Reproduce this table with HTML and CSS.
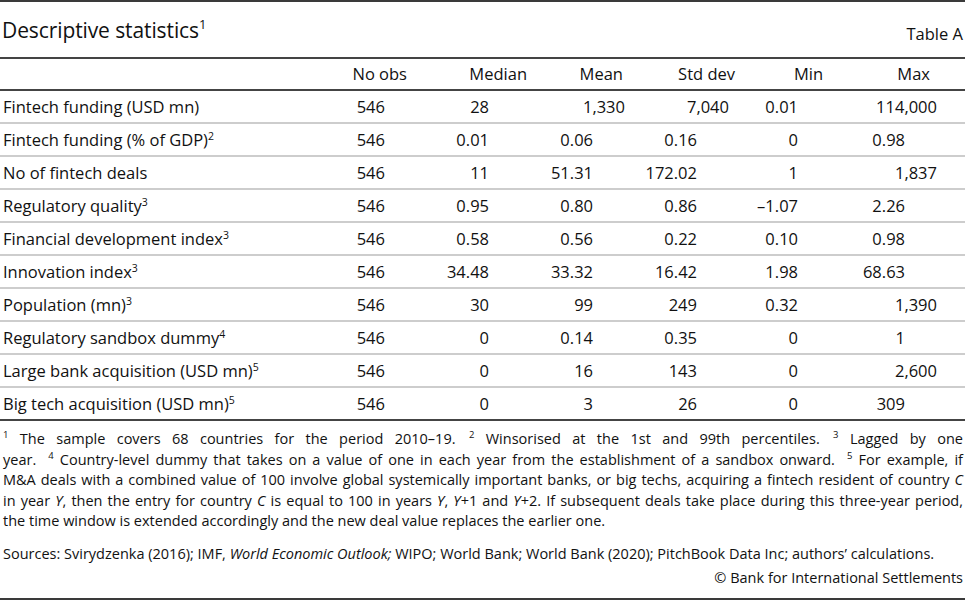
FILE: index.html
```html
<!DOCTYPE html>
<html lang="en">
<head>
<meta charset="utf-8">
<title>Descriptive statistics</title>
<link rel="stylesheet" href="styles.css">
</head>
<body>
<div class="page">
  <header class="head">
    <h1 class="title">Descriptive statistics<sup>1</sup></h1>
    <span class="tag">Table A</span>
  </header>
  <div class="thead">
    <span></span><span>No obs</span><span>Median</span><span>Mean</span><span>Std dev</span><span>Min</span><span>Max</span><span></span>
  </div>
  <div class="row"><span class="lab">Fintech funding (USD mn)</span><span>546</span><span>28</span><span><i class="w">1,330</i></span><span><i class="w">7,040</i></span><span>0.01</span><span><i class="w">114,000</i></span><span></span></div>
  <div class="row"><span class="lab">Fintech funding (% of GDP)<sup>2</sup></span><span>546</span><span>0.01</span><span>0.06</span><span>0.16</span><span>0</span><span>0.98</span><span></span></div>
  <div class="row"><span class="lab">No of fintech deals</span><span>546</span><span>11</span><span>51.31</span><span>172.02</span><span>1</span><span><i class="w">1,837</i></span><span></span></div>
  <div class="row"><span class="lab">Regulatory quality<sup>3</sup></span><span>546</span><span>0.95</span><span>0.80</span><span>0.86</span><span>–1.07</span><span>2.26</span><span></span></div>
  <div class="row"><span class="lab">Financial development index<sup>3</sup></span><span>546</span><span>0.58</span><span>0.56</span><span>0.22</span><span>0.10</span><span>0.98</span><span></span></div>
  <div class="row"><span class="lab">Innovation index<sup>3</sup></span><span>546</span><span>34.48</span><span>33.32</span><span>16.42</span><span>1.98</span><span>68.63</span><span></span></div>
  <div class="row"><span class="lab">Population (mn)<sup>3</sup></span><span>546</span><span>30</span><span>99</span><span>249</span><span>0.32</span><span><i class="w">1,390</i></span><span></span></div>
  <div class="row"><span class="lab">Regulatory sandbox dummy<sup>4</sup></span><span>546</span><span>0</span><span>0.14</span><span>0.35</span><span>0</span><span>1</span><span></span></div>
  <div class="row"><span class="lab">Large bank acquisition (USD mn)<sup>5</sup></span><span>546</span><span>0</span><span>16</span><span>143</span><span>0</span><span><i class="w">2,600</i></span><span></span></div>
  <div class="row last"><span class="lab">Big tech acquisition (USD mn)<sup>5</sup></span><span>546</span><span>0</span><span>3</span><span>26</span><span>0</span><span>309</span><span></span></div>

  <div class="notes">
    <div class="ln"><sup>1</sup> The sample covers 68 countries for the period 2010–19. <span class="gap"><sup>2</sup></span> Winsorised at the 1st and 99th percentiles. <span class="gap"><sup>3</sup></span> Lagged by one</div>
    <div class="ln">year. <span class="gap2"><sup>4</sup></span> Country-level dummy that takes on a value of one in each year from the establishment of a sandbox onward. <span class="gap2"><sup>5</sup></span> For example, if</div>
    <div class="ln">M&amp;A deals with a combined value of 100 involve global systemically important banks, or big techs, acquiring a fintech resident of country <em>C</em></div>
    <div class="ln">in year <em>Y</em>, then the entry for country <em>C</em> is equal to 100 in years <em>Y</em>, <em>Y</em>+1 and <em>Y</em>+2. If subsequent deals take place during this three-year period,</div>
    <div class="ln end">the time window is extended accordingly and the new deal value replaces the earlier one.</div>
  </div>
  <p class="src">Sources: Svirydzenka (2016); IMF, <em>World Economic Outlook;</em> WIPO; World Bank; World Bank (2020); PitchBook Data Inc; authors’ calculations.</p>
  <p class="copy">© Bank for International Settlements</p>
</div>
</body>
</html>
```

FILE: styles.css
```css
html, body {
  margin: 0;
  padding: 0;
  background: #fff;
}

body {
  font-family: "Open Sans", "Noto Sans", sans-serif;
  color: #111;
}

.page {
  width: 965px;
  height: 600px;
  box-sizing: border-box;
  border-top: 2px solid #3a3a3a;
  border-bottom: 2px solid #3a3a3a;
  display: flex;
  flex-direction: column;
}

.head {
  height: 57px;
  flex: none;
  box-sizing: border-box;
  border-bottom: 2px solid #444;
  display: flex;
  justify-content: space-between;
  align-items: flex-start;
  padding: 0 2px 0 2px;
}

.title {
  margin: 0;
  padding-top: 15px;
  font-weight: 400;
  font-size: 21px;
  line-height: 26px;
  letter-spacing: -0.1px;
}

.title sup {
  font-size: 13px;
  vertical-align: 9px;
  line-height: 0;
}

.tag {
  padding-top: 22px;
  font-size: 16.5px;
  line-height: 20px;
}

.thead,
.row {
  display: grid;
  flex: none;
  box-sizing: border-box;
  font-size: 16.5px;
}

.thead {
  grid-template-columns: 300px 107px 120px 96px 112px 88px 107px 1fr;
  height: 32px;
  line-height: 30px;
  border-bottom: 2px solid #444;
  text-align: right;
}

.row {
  grid-template-columns: 300px 85px 104px 104px 104px 101px 107px 1fr;
  height: 33px;
  padding-top: 1px;
  line-height: 30px;
  border-bottom: 2px solid #cdcdcd;
  text-align: right;
}

.row.last {
  border-bottom-color: #444;
}

.row .lab {
  text-align: left;
  padding-left: 3px;
}

.lab sup {
  font-size: 10.5px;
  vertical-align: 6px;
  line-height: 0;
}

.w {
  font-style: normal;
  display: inline-block;
  margin-right: -32px;
}

.notes {
  flex: none;
  padding: 8px 2px 0 3px;
  font-size: 14.5px;
  line-height: 20.5px;
}

.ln {
  text-align: justify;
  text-align-last: justify;
  white-space: nowrap;
}

.ln.end {
  text-align-last: left;
}

.notes sup {
  font-size: 9.5px;
  vertical-align: 6px;
  line-height: 0;
}

.gap {
  margin-left: 2px;
}

.gap2 {
  margin-left: 6px;
}

.src {
  margin: 12px 0 0;
  padding: 0 3px;
  font-size: 14.5px;
  line-height: 20.5px;
}

.copy {
  margin: 4px 0 0;
  padding: 0 2px 0 0;
  text-align: right;
  font-size: 14.5px;
  line-height: 20.5px;
}
```
